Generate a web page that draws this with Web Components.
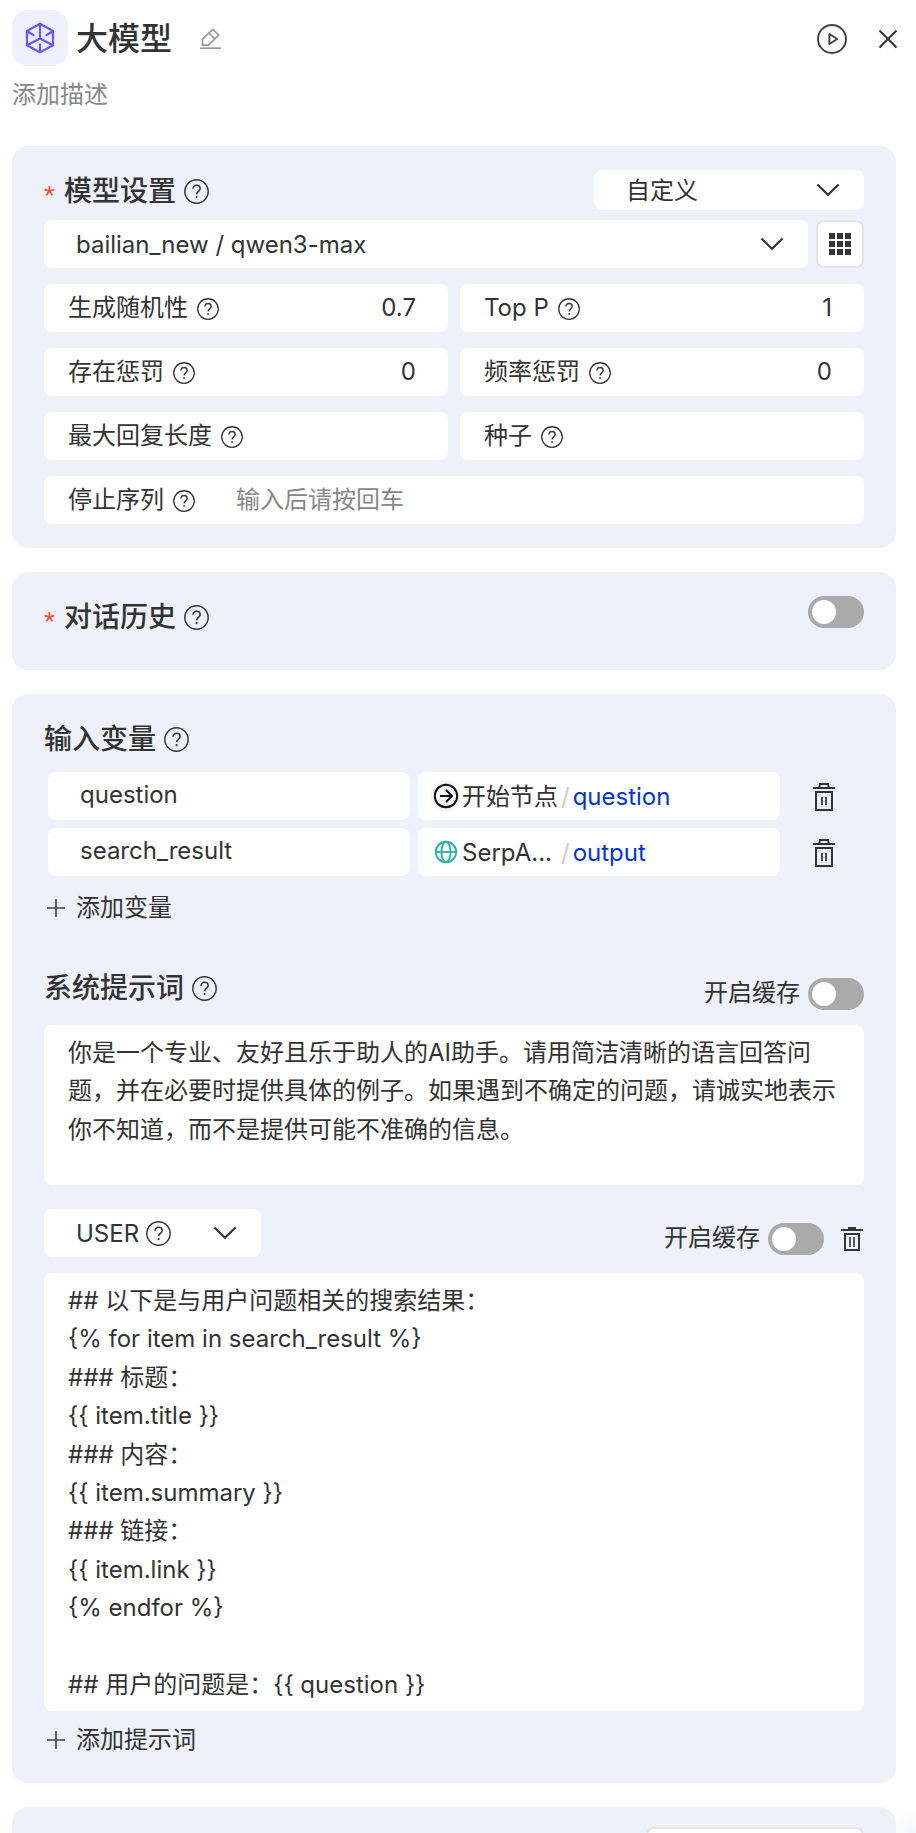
<!DOCTYPE html>
<html lang="zh-CN">
<head>
<meta charset="utf-8">
<meta name="viewport" content="width=device-width, initial-scale=1">
<title>大模型</title>
<style>
  html, body { margin: 0; height: 100%; }
  body {
    --text: #333;
    --muted: #888;
    --card: #eef1f9;
    --line: #e5e5e5;
    --link: #0034d6;
    background: #fff;
    color: var(--text);
    font: 400 24px/38px Inter, "Noto Sans CJK SC", sans-serif;
  }
</style>
</head>
<body>
<node-panel>
  <node-header slot="header" name="大模型" description="添加描述"></node-header>

  <section-card>
    <section-head label="模型设置" required>
      <ui-select slot="action" class="mode" size="small" label="配置方式" value="自定义"></ui-select>
    </section-head>
    <model-settings></model-settings>
  </section-card>

  <section-card>
    <section-head label="对话历史" required>
      <ui-switch slot="action" label="对话历史"></ui-switch>
    </section-head>
  </section-card>

  <section-card>
    <section-head label="输入变量"></section-head>
    <variable-list>
      <variable-row name="question" icon="start" node="开始节点" field="question"></variable-row>
      <variable-row name="search_result" icon="globe" node="SerpA..." field="output"></variable-row>
    </variable-list>
    <add-button class="add-variable">添加变量</add-button>
    <prompt-block label="系统提示词" rows="4">你是一个专业、友好且乐于助人的AI助手。请用简洁清晰的语言回答问题，并在必要时提供具体的例子。如果遇到不确定的问题，请诚实地表示你不知道，而不是提供可能不准确的信息。</prompt-block>
    <prompt-block role-name="USER" removable rows="11">## 以下是与用户问题相关的搜索结果：
{% for item in search_result %}
### 标题：
{{ item.title }}
### 内容：
{{ item.summary }}
### 链接：
{{ item.link }}
{% endfor %}

## 用户的问题是：{{ question }}</prompt-block>
    <add-button class="add-prompt">添加提示词</add-button>
  </section-card>

  <section-card>
    <output-format></output-format>
  </section-card>
</node-panel>

<script>
const define = (name, render, after) => customElements.define(name, class extends HTMLElement {
  connectedCallback() {
    if (this.shadowRoot) return;
    const template = document.createElement('template');
    template.innerHTML = render(this);
    this.attachShadow({ mode: 'open' }).append(template.content.cloneNode(true));
    if (after) after(this, this.shadowRoot);
  }
});

const reset = `
  *, *::before { box-sizing: border-box; }
  button, input, select, textarea { margin: 0; padding: 0; border: 0; outline: 0; background: none; font: inherit; color: inherit; }
  button { cursor: pointer; }
`;

const icons = {
  cube: [32, 32, `<g stroke="#6658ff" stroke-width="2.2" stroke-linejoin="round" stroke-linecap="round"><path d="M16 1.8 29 9v14.2L16 30.4 3 23.2V9z"/><path d="M16 2v14.5M16 16.5 3.5 23M16 16.5 28.5 23M3.5 9.5l6 3.5M28.5 9.5l-6 3.500M16 30v-7.500"/></g>`],
  edit: [22, 22, `<g stroke="#999" stroke-width="1.7" stroke-linejoin="round"><path d="M2.5 17.2v-6L12.8 1.4l6 5.6L8.5 17.2zM9 5.2l6 5.8"/><path d="M0 20.2h21"/></g>`],
  play: [32, 32, `<g stroke="#444" stroke-width="2" stroke-linejoin="round"><circle cx="16" cy="16" r="14"/><path d="M13.4 11v10l7.8-5z"/></g>`],
  close: [32, 32, `<path stroke="#333" stroke-width="2" d="m7.5 7.5 17 17m0-17-17 17"/>`],
  help: [24, 24, `<g stroke="currentColor"><circle cx="12" cy="12" r="11.2" stroke-width="1.4"/><path stroke-width="1.5" d="M8.6 9.4c0-2 1.5-3.400 3.5-3.400s3.400 1.300 3.400 3.100c0 1.400-.8 2-1.700 2.800-1 .8-1.700 1.400-1.700 2.800"/></g><circle cx="12.1" cy="17.400" r="1" fill="currentColor"/>`],
  grid: [22, 22, `<path fill="#333" d="M0 0h6v6H0zM8 0h6v6H8zM16 0h6v6h-6zM0 8h6v6H0zM8 8h6v6H8zM16 8h6v6h-6zM0 16h6v6H0zM8 16h6v6H8zM16 16h6v6h-6z"/>`],
  chevron: [24, 24, `<path stroke="#333" stroke-width="2.200" d="m1.400 6.500 10.600 10.300L22.600 6.500"/>`],
  plus: [24, 24, `<path stroke="#444" stroke-width="1.600" d="M12 3v18M3 12h18"/>`],
  trash: [24, 28, `<g stroke="#333" stroke-width="2"><path d="M1 5h22M7 5l1-4h8l1 4M4 9h16v18H4z"/><path stroke-width="1.700" d="M10 14v8M14 14v8"/></g>`],
  trashSmall: [24, 24, `<g stroke="#333" stroke-width="2"><path d="M1 3h22M8 1h8M5 7h14v16H5z"/><path stroke-width="1.600" d="M10 10v10M14 10v10"/></g>`],
  start: [32, 32, `<circle cx="16" cy="16" r="15.500" fill="#f5f5f5"/><circle cx="16" cy="16" r="11.200" stroke="#111" stroke-width="2"/><path stroke="#111" stroke-width="2" d="M10 16h12M16 10l6 6-6 6"/>`],
  globe: [32, 32, `<g stroke="#33b0a8" stroke-width="1.900"><circle cx="16" cy="16" r="10.200"/><ellipse cx="16" cy="16" rx="4.600" ry="10.200"/><path d="M5.800 16h20.400"/></g>`]
};

define('ui-icon', el => {
  const [w, h, body] = icons[el.getAttribute('name')];
  const k = el.hasAttribute('width') ? el.getAttribute('width') / w : 1;
  return `<style>:host { display: block; flex: none; } svg { display: block; }</style>
    <svg width="${w * k}" height="${h * k}" viewBox="0 0 ${w} ${h}" fill="none" aria-hidden="true">${body}</svg>`;
});

define('node-panel', () => `
  <style>
    :host {
      display: flex; flex-direction: column; box-sizing: border-box; height: 100vh;
      padding: 10px 20px 0 12px; overflow-y: auto; scrollbar-width: none;
      background: radial-gradient(circle at bottom right, #f5f6fe, #fff 28px);
    }
    main { display: flex; flex-direction: column; gap: 24px; margin-top: 32px; }
  </style>
  <slot name="header"></slot>
  <main><slot></slot></main>`);

define('node-header', el => `
  <style>${reset}
    :host { display: block; }
    .bar { display: flex; align-items: center; height: 56px; }
    .logo { display: grid; place-items: center; width: 56px; height: 56px; border-radius: 16px; background: #eef0ff; }
    h1 { margin: 0 28px 0 8px; font-size: 32px; line-height: 48px; font-weight: 500; }
    h1, button { padding-top: 2px; }
    .actions { display: flex; gap: 24px; margin-left: auto; margin-right: -8px; }
    p { margin: 10px 0 0; color: var(--muted); }
  </style>
  <div class="bar">
    <div class="logo"><ui-icon name="cube"></ui-icon></div>
    <h1>${el.getAttribute('name')}</h1>
    <button aria-label="编辑"><ui-icon name="edit"></ui-icon></button>
    <div class="actions">
      <button aria-label="运行"><ui-icon name="play"></ui-icon></button>
      <button aria-label="关闭"><ui-icon name="close"></ui-icon></button>
    </div>
  </div>
  <p>${el.getAttribute('description')}</p>`);

define('section-card', () => `
  <style>
    :host { display: block; padding: 24px 32px; border-radius: 16px; background: var(--card); }
    ::slotted(.add-variable) { margin-top: 13px; }
    ::slotted(.add-prompt) { margin-top: 10px; }
  </style><slot></slot>`);

define('section-head', el => `
  <style>
    :host { display: flex; align-items: flex-start; justify-content: space-between; margin-bottom: 8px; }
    .title { display: flex; align-items: center; gap: 8px; }
    h2 { margin: 0; font-size: 28px; line-height: 42px; font-weight: 500; }
    .star { width: 12px; height: 32px; font: 28px/42px "Liberation Sans", sans-serif; color: #ff4d2d; }
    ::slotted(.mode) { width: 270px; }
  </style>
  <div class="title">
    ${el.hasAttribute('required') ? '<span class="star">*</span>' : ''}
    <h2>${el.getAttribute('label')}</h2>
    <ui-icon name="help" width="25"></ui-icon>
  </div>
  <slot name="action"></slot>`);

define('ui-select', el => `
  <style>${reset}
    :host { display: grid; min-width: 0; }
    select, .hint, ui-icon { grid-area: 1 / 1; }
    select {
      appearance: none; width: 100%; height: ${el.getAttribute('size') === 'small' ? 40 : 48}px;
      padding: 2px 64px 0 32px; border-radius: 8px; background: #fff;
    }
    .chevron { place-self: center end; margin-right: 24px; pointer-events: none; }
    .hint { place-self: center start; margin-left: 102px; pointer-events: none; }
  </style>
  <select aria-label="${el.getAttribute('label')}"><option>${el.getAttribute('value')}</option></select>
  ${el.hasAttribute('help') ? '<ui-icon class="hint" name="help" width="25"></ui-icon>' : ''}
  <ui-icon class="chevron" name="chevron"></ui-icon>`);

define('ui-switch', el => `
  <style>${reset}
    :host { display: block; }
    label { display: flex; align-items: center; gap: 8px; line-height: 30px; }
    span { padding-bottom: 2px; }
    input { appearance: none; width: 56px; height: 32px; padding: 4px; border-radius: 16px; background: #aaa; cursor: pointer; }
    input::before { content: ""; display: block; width: 24px; height: 24px; border-radius: 50%; background: #fff; }
    input:checked { background: var(--link); }
    input:checked::before { margin-left: 24px; }
  </style>
  <label>${el.hasAttribute('text') ? `<span>${el.getAttribute('text')}</span>` : ''}
    <input type="checkbox" role="switch" aria-label="${el.getAttribute('label') || el.getAttribute('text')}"></label>`);

define('param-field', el => `
  <style>${reset}
    :host { display: flex; align-items: center; height: 48px; padding: 0 24px; border-radius: 8px; background: #fff; box-sizing: border-box; min-width: 0; }
    label { white-space: nowrap; }
    ui-icon { margin: 2px 0 0 9px; }
    input { flex: 1; min-width: 0; height: 46px; margin-bottom: 2px; padding-right: 8px; text-align: right; }
    :host([placeholder]) input { padding-left: 41px; text-align: left; }
    input::placeholder { color: var(--muted); opacity: 1; }
  </style>
  <label for="value">${el.getAttribute('label')}</label>
  <ui-icon name="help" width="22"></ui-icon>
  <input id="value" type="text" value="${el.getAttribute('value') || ''}" placeholder="${el.getAttribute('placeholder') || ''}">`);

define('model-settings', () => `
  <style>${reset}
    :host { display: flex; flex-direction: column; gap: 16px; }
    .model { display: flex; gap: 8px; }
    ui-select { flex: 1; }
    button { display: grid; place-items: center; width: 48px; height: 48px; border: 2px solid var(--line); border-radius: 8px; background: #fff; }
    .params { display: grid; grid-template-columns: 1fr 1fr; gap: 16px 12px; }
    .wide { grid-column: 1 / -1; }
  </style>
  <div class="model">
    <ui-select label="模型" value="bailian_new / qwen3-max"></ui-select>
    <button aria-label="模型列表"><ui-icon name="grid"></ui-icon></button>
  </div>
  <div class="params">
    <param-field label="生成随机性" value="0.7"></param-field>
    <param-field label="Top P" value="1"></param-field>
    <param-field label="存在惩罚" value="0"></param-field>
    <param-field label="频率惩罚" value="0"></param-field>
    <param-field label="最大回复长度"></param-field>
    <param-field label="种子"></param-field>
    <param-field class="wide" label="停止序列" placeholder="输入后请按回车"></param-field>
  </div>`);

define('variable-list', () => `
  <style>:host { display: flex; flex-direction: column; gap: 8px; padding: 4px 0 0 4px; }</style>
  <slot></slot>`);

define('variable-row', el => `
  <style>${reset}
    :host { display: grid; grid-template-columns: 1fr 1fr 76px; gap: 8px; height: 48px; }
    input, .source { min-width: 0; border-radius: 8px; background: #fff; }
    input { padding: 0 32px 2px; }
    .source { display: flex; align-items: center; padding: 0 12px; text-align: left; }
    .source span { padding-top: 2px; }
    .node { width: 96px; white-space: nowrap; overflow: hidden; }
    .slash { margin: 0 3px; color: #ccc; }
    .field { color: var(--link); }
    .remove { display: grid; place-items: center; justify-self: center; width: 48px; margin-right: 4px; padding-top: 2px; }
  </style>
  <input type="text" aria-label="变量名" value="${el.getAttribute('name')}">
  <button class="source">
    <ui-icon name="${el.getAttribute('icon')}"></ui-icon>
    <span class="node">${el.getAttribute('node')}</span><span class="slash">/</span><span class="field">${el.getAttribute('field')}</span>
  </button>
  <button class="remove" aria-label="删除变量"><ui-icon name="trash"></ui-icon></button>`);

define('add-button', () => `
  <style>${reset}
    :host { display: flex; }
    button { display: flex; align-items: center; gap: 8px; }
  </style>
  <button><ui-icon name="plus"></ui-icon><slot></slot></button>`);

define('prompt-block', el => `
  <style>${reset}
    :host { display: block; margin-top: 24px; }
    :host([label]) { margin-top: 40px; }
    .head { display: flex; justify-content: space-between; align-items: flex-start; margin-bottom: 16px; }
    .tools { display: flex; align-items: center; gap: 16px; padding-top: 14px; }
    :host([label]) .tools { padding-top: 11px; }
    :host([label]) .head { height: 42px; }
    section-head { margin: 0; }
    ui-select { width: 217px; }
    textarea { display: block; width: 100%; padding: 9px 24px 7px; border-radius: 8px; background: #fff; line-height: 1.6; resize: none; overflow: hidden; }
    :host([label]) textarea { height: 160px; }
  </style>
  <div class="head">
    ${el.hasAttribute('label')
      ? `<section-head label="${el.getAttribute('label')}"></section-head>`
      : `<ui-select label="角色" value="${el.getAttribute('role-name')}" help></ui-select>`}
    <div class="tools">
      <ui-switch text="开启缓存"></ui-switch>
      ${el.hasAttribute('removable') ? '<button aria-label="删除提示词"><ui-icon name="trashSmall"></ui-icon></button>' : ''}
    </div>
  </div>
  <textarea rows="${el.getAttribute('rows')}" spellcheck="false" aria-label="${el.getAttribute('label') || el.getAttribute('role-name')}"></textarea>`,
  (el, root) => { root.querySelector('textarea').value = el.textContent; });

define('output-format', () => `
  <style>${reset}
    :host { display: flex; justify-content: flex-end; margin-top: -4px; }
    button { width: 218px; height: 48px; border: 2px solid var(--line); border-radius: 8px; background: #fff; }
  </style>
  <button aria-label="输出格式"></button>`);
</script>
</body>
</html>
